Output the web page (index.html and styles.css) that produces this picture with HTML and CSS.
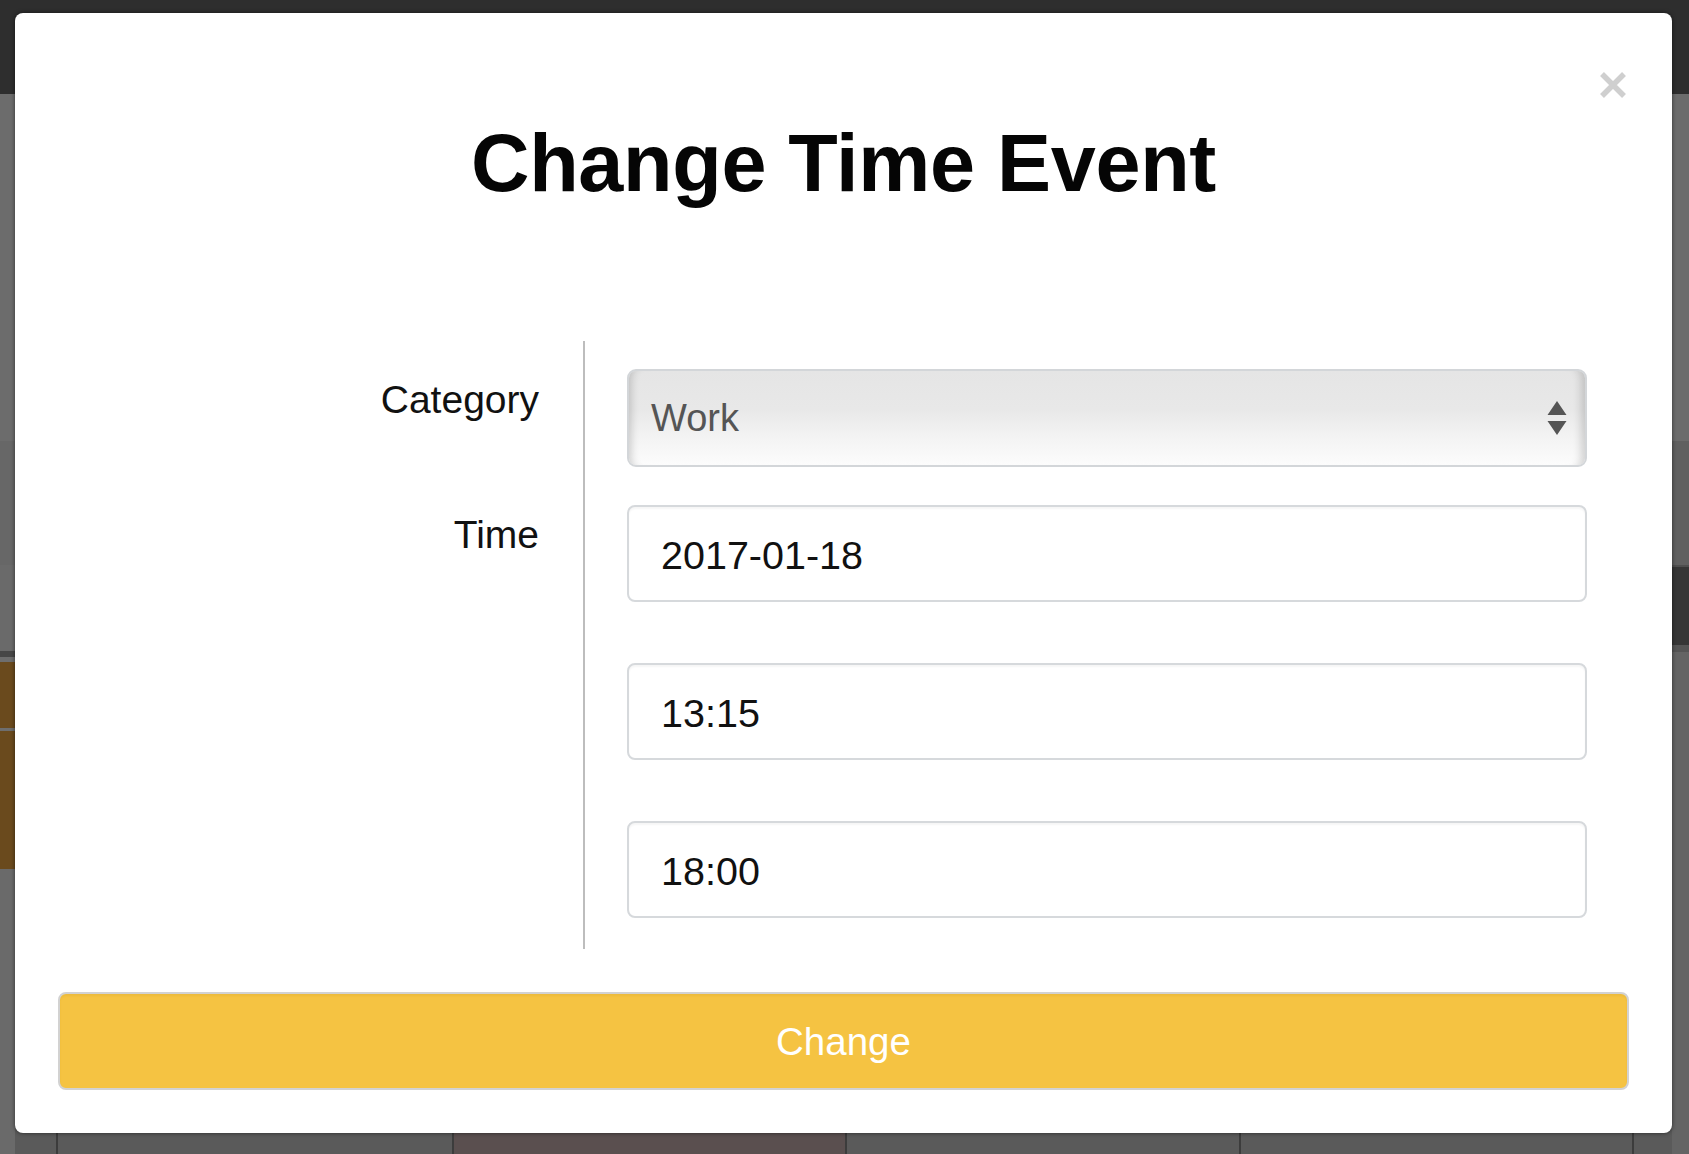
FILE: index.html
```html
<!DOCTYPE html>
<html lang="en">
<head>
<meta charset="utf-8">
<title>Change Time Event</title>
<link rel="stylesheet" href="styles.css">
</head>
<body>
<div class="app">
  <header class="app-header"></header>
  <div class="app-body">
    <div class="side side-left">
      <div class="band l1"></div>
      <div class="band l2"></div>
      <div class="band l3"></div>
      <div class="band l4"></div>
      <div class="band l5"></div>
      <div class="band l6"></div>
      <div class="band l7"></div>
      <div class="band l8"></div>
      <div class="band fill-left"></div>
    </div>
    <div class="center">
      <div class="center-fill"></div>
      <div class="cal-row">
        <div class="cal-cell"></div>
        <div class="cal-cell"></div>
        <div class="cal-cell cal-brown"></div>
        <div class="cal-cell"></div>
        <div class="cal-cell"></div>
        <div class="cal-cell"></div>
      </div>
    </div>
    <div class="side side-right">
      <div class="band r1"></div>
      <div class="band r2"></div>
      <div class="band r3"></div>
      <div class="band r4"></div>
      <div class="band r5"></div>
      <div class="band fill-right"></div>
    </div>
  </div>

  <div class="modal">
    <button class="close" type="button" aria-label="Close">
      <svg width="28" height="28" viewBox="0 0 28 28"><path d="M3 3 L25 25 M25 3 L3 25" stroke="#cfcfcf" stroke-width="5.5" fill="none"/></svg>
    </button>
    <h1 class="title">Change Time Event</h1>
    <div class="form">
      <div class="labels">
        <div class="label label-category">Category</div>
        <div class="label label-time">Time</div>
      </div>
      <div class="fields">
        <div class="select">
          <span class="select-value">Work</span>
          <svg class="select-arrows" width="20" height="36" viewBox="0 0 20 36"><path d="M10 1 L19.5 15 L0.5 15 Z M0.5 21 L19.5 21 L10 35 Z" fill="#555"/></svg>
        </div>
        <div class="input input-date">2017-01-18</div>
        <div class="input input-time">13:15</div>
        <div class="input input-time">18:00</div>
      </div>
    </div>
    <button class="submit" type="button">Change</button>
  </div>
</div>
</body>
</html>
```
FILE: styles.css
```css
* { box-sizing: border-box; }
html, body { margin: 0; padding: 0; }
body {
  width: 1689px;
  height: 1154px;
  overflow: hidden;
  font-family: "Liberation Sans", Arial, Helvetica, sans-serif;
  background: #626262;
}

.app {
  position: relative;
  width: 1689px;
  height: 1154px;
  display: grid;
  grid-template-rows: 94px 1fr;
}
.app-header { background: #2e2e2e; }
.app-body {
  display: grid;
  grid-template-columns: 15px 1fr 17px;
}
.side { display: flex; flex-direction: column; }
.band { flex: none; }

.l1 { height: 347px; background: #6c6c6c; }
.l2 { height: 124px; background: #676767; }
.l3 { height: 86px; background: #6a6a6a; }
.l4 { height: 6px; background: #474747; }
.l5 { height: 5px; background: #6e6e6e; }
.l6 { height: 66px; background: #6a4a1d; }
.l7 { height: 3px; background: #6e6e6e; }
.l8 { height: 138px; background: #6a4a1d; }
.fill-left { flex: 1; background: #6a6a6a; }

.r1 { height: 347px; background: #6c6c6c; }
.r2 { height: 124px; background: #606060; }
.r3 { height: 2px; background: #4f4f4f; }
.r4 { height: 78px; background: #363636; }
.r5 { height: 7px; background: #555555; }
.fill-right { flex: 1; background: #646464; }

.center { display: flex; flex-direction: column; }
.center-fill { flex: 1; background: #5c5c5c; }
.cal-row {
  height: 40px;
  display: grid;
  grid-template-columns: 41px 396px 393px 394px 393px 1fr;
  background: #5a5a5a;
}
.cal-cell { border-left: 2px solid #3c3c3c; }
.cal-cell:first-child { border-left: none; }
.cal-brown { background: #5a4f4f; }

.modal {
  position: absolute;
  left: 15px;
  top: 13px;
  width: 1657px;
  height: 1120px;
  background: #ffffff;
  border-radius: 8px;
  box-shadow: 0 0 4px rgba(0, 0, 0, 0.55);
  padding: 0 43px 43px;
  display: flex;
  flex-direction: column;
}

.close {
  position: absolute;
  top: 58px;
  right: 45px;
  width: 28px;
  height: 28px;
  padding: 0;
  border: none;
  background: none;
  display: block;
}
.close svg { display: block; }

.title {
  margin: 110px 0 137px;
  font-size: 81px;
  line-height: 81px;
  font-weight: 700;
  letter-spacing: -0.3px;
  text-align: center;
  color: #050505;
}

.form {
  display: grid;
  grid-template-columns: 525px 1fr;
  height: 608px;
}
.labels {
  padding: 28px 44px 0 0;
  text-align: right;
}
.label {
  font-size: 39px;
  line-height: 44px;
  color: #111;
}
.label-category { margin-top: 9px; }
.label-time { margin-top: 91px; }

.fields {
  border-left: 2px solid #bdbdbd;
  padding: 28px 42px 31px 42px;
  display: flex;
  flex-direction: column;
}

.select {
  height: 98px;
  margin-bottom: 38px;
  border: 2px solid #d3d6d9;
  border-radius: 9px;
  background: linear-gradient(#e5e5e5 0%, #e8e8e8 40%, #f3f3f3 70%, #fcfcfc 100%);
  box-shadow: inset 10px 0 8px -8px rgba(0, 0, 0, 0.18), inset -12px 0 8px -8px rgba(0, 0, 0, 0.16);
  display: flex;
  align-items: center;
  justify-content: space-between;
  padding: 0 18px 0 22px;
}
.select-value {
  font-size: 38px;
  color: #555;
}
.select-arrows { display: block; }

.input {
  height: 97px;
  border: 2px solid #d6d9dc;
  border-radius: 8px;
  background: #fff;
  box-shadow: inset 0 2px 2px rgba(0, 0, 0, 0.04);
  display: flex;
  align-items: center;
  padding: 3px 32px 0;
  font-size: 39.5px;
  color: #111;
}
.input + .input { margin-top: 61px; }

.submit {
  margin-top: 43px;
  height: 98px;
  width: 100%;
  border: 2px solid #d2d2d2;
  border-radius: 8px;
  background: #f5c342;
  box-shadow: inset 0 2px 2px rgba(180, 130, 20, 0.12);
  color: #ffffff;
  font-family: "Liberation Sans", Arial, Helvetica, sans-serif;
  font-size: 38.5px;
  padding: 2px 0 0;
}
```
